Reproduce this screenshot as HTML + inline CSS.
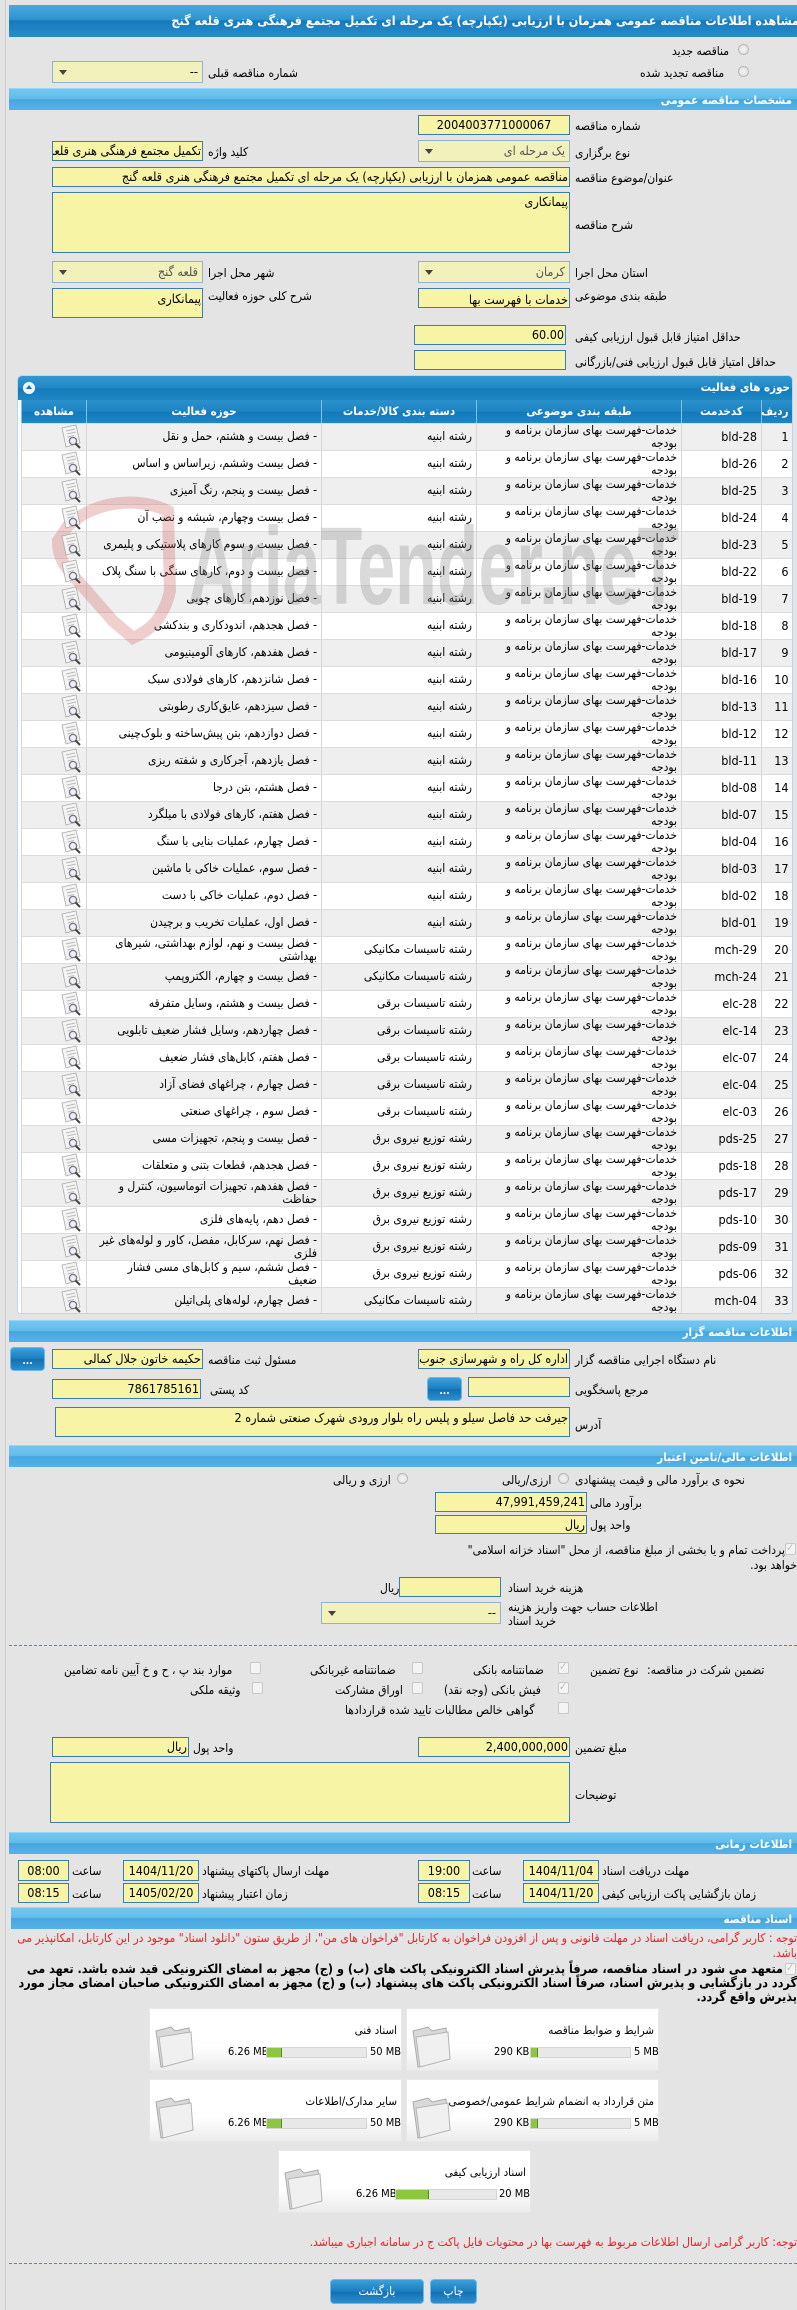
<!DOCTYPE html>
<html><head><meta charset="utf-8">
<style>
*{box-sizing:border-box;margin:0;padding:0}
body{width:797px;height:2310px;background:#e4e4e4;font-family:"DejaVu Sans Condensed","DejaVu Sans",sans-serif;font-size:11px;color:#000;position:relative;overflow:hidden}
.a{position:absolute}
.l{position:absolute;white-space:nowrap;direction:rtl;font-size:12px;line-height:14px}
.i{position:absolute;background:#f7f5a5;border:1px solid #3b7cb3;direction:rtl;white-space:nowrap;overflow:hidden;font-size:12.5px;padding:0 1px;text-align:right}
.s{position:absolute;background:#f2f0bb;border:1px solid #8fb3d0;direction:rtl;white-space:nowrap;overflow:hidden;font-size:12.5px;padding:0 4px;color:#555}
.s:after{content:"";position:absolute;left:6px;top:50%;margin-top:-2px;border:4px solid transparent;border-top:5px solid #444;border-bottom:0}
.h{position:absolute;left:9px;width:788px;height:22px;background:linear-gradient(#74c6ef 0%,#62bdea 45%,#46a6e0 50%,#56b2e6 100%);border-top:1px solid #9ad6f5;color:#fff;font-weight:bold;font-size:11.5px;direction:rtl;padding-right:5px;line-height:22px}
.r{position:absolute;width:11px;height:11px;border-radius:50%;border:1px solid #b8b8b8;background:radial-gradient(#f4f4f4,#dcdcdc)}
.c{position:absolute;width:11px;height:12px;border:1px solid #c8c8c8;background:#f4f4f4;border-radius:2px}
.c.k:after{content:"✓";position:absolute;left:0;top:-3px;font-size:11px;color:#bbb}
.b{position:absolute;background:linear-gradient(#3aa0dc,#1b7dbf 50%,#1370b2 52%,#2a8fd0);border:1px solid #6bb9e6;border-radius:4px;color:#fff;text-align:center;font-weight:bold}
table{border-collapse:collapse;table-layout:fixed;direction:rtl}
td,th{height:27px;padding:0 4px;font-size:12px;line-height:13px;text-align:right;vertical-align:middle;border-left:1px solid #d6d6d6;border-bottom:1px solid #dcdcdc;overflow:hidden}
td:nth-child(3){padding-left:28px}
td:nth-child(5){padding-left:12px}
th{height:23px;background:linear-gradient(#2a91cc,#1d83c2 50%,#137ab9 52%,#1f86c4);color:#fff;text-align:center;border-left:1px solid #7cc3ea;font-size:11.5px}
tr:nth-child(even) td{background:#efefef}
tr:nth-child(odd) td{background:#fff}
td.n{text-align:right;font-size:12.5px;padding-left:4px}
.fb{position:absolute;width:253px;height:63px;background:linear-gradient(#fff 60%,#ececec);border:1px solid #e8e8e8}
.fb .t{position:absolute;right:4px;top:14px;direction:rtl;font-size:11.5px;white-space:nowrap}
.fb .bar{position:absolute;top:38px;height:11px;background:#e8e8e8;border:1px solid #d4d4d4}
.fb .bar i{position:absolute;left:0;top:0;bottom:0;background:#8dc63f;border-right:1px solid #5a8a20}
.fb .sz{position:absolute;top:36px;font-size:11px;white-space:nowrap}
</style></head><body>
<div class="a" style="left:5px;top:0;width:1px;height:2310px;background:#cfcfcf"></div>

<div class="a" style="left:9px;top:5px;width:788px;height:32px;background:linear-gradient(#48a9dc 0%,#2f94d0 45%,#157abb 50%,#2a8ccc 100%);overflow:hidden">
<div class="a" style="right:-2px;top:8px;white-space:nowrap;direction:rtl;color:#fff;font-weight:bold;font-size:12.5px">مشاهده اطلاعات مناقصه عمومی همزمان با ارزیابی (یکپارچه) یک مرحله ای تکمیل مجتمع فرهنگی هنری قلعه گنج</div></div>

<div class="r" style="left:738px;top:44px"></div><div class="l" style="left:672px;top:44px">مناقصه جدید</div>
<div class="r" style="left:738px;top:66px"></div><div class="l" style="left:640px;top:66px">مناقصه تجدید شده</div>
<div class="s" style="left:52px;top:61px;width:151px;height:22px;line-height:20px;color:#000">--</div>
<div class="l" style="left:208px;top:66px">شماره مناقصه قبلی</div>

<div class="h" style="top:88px">مشخصات مناقصه عمومی</div>

<div class="i" style="left:418px;top:115px;width:152px;height:20px;line-height:18px;text-align:center">2004003771000067</div><div class="l" style="left:575px;top:119px">شماره مناقصه</div>
<div class="s" style="left:418px;top:140px;width:152px;height:22px;line-height:20px">یک مرحله ای</div><div class="l" style="left:575px;top:146px">نوع برگزاری</div>
<div class="i" style="left:52px;top:141px;width:151px;height:20px;line-height:18px">تکمیل مجتمع فرهنگی هنری قلعه گنج</div><div class="l" style="left:208px;top:145px">کلید واژه</div>
<div class="i" style="left:52px;top:167px;width:518px;height:20px;line-height:18px">مناقصه عمومی همزمان با ارزیابی (یکپارچه) یک مرحله ای تکمیل مجتمع فرهنگی هنری قلعه گنج</div><div class="l" style="left:575px;top:171px">عنوان/موضوع مناقصه</div>
<div class="i" style="left:52px;top:192px;width:518px;height:61px;line-height:18px;white-space:normal">پیمانکاری</div><div class="l" style="left:575px;top:218px">شرح مناقصه</div>
<div class="s" style="left:418px;top:261px;width:152px;height:22px;line-height:20px">کرمان</div><div class="l" style="left:575px;top:266px">استان محل اجرا</div>
<div class="s" style="left:52px;top:261px;width:151px;height:22px;line-height:20px">قلعه گنج</div><div class="l" style="left:208px;top:266px">شهر محل اجرا</div>
<div class="i" style="left:418px;top:288px;width:152px;height:20px;line-height:22px">خدمات با فهرست بها</div><div class="l" style="left:575px;top:289px">طبقه بندی موضوعی</div>
<div class="i" style="left:52px;top:288px;width:151px;height:30px;line-height:20px">پیمانکاری</div><div class="l" style="left:208px;top:289px">شرح کلی حوزه فعالیت</div>
<div class="i" style="left:414px;top:325px;width:152px;height:20px;line-height:18px">60.00</div><div class="l" style="left:575px;top:330px">حداقل امتیاز قابل قبول ارزیابی کیفی</div>
<div class="i" style="left:414px;top:350px;width:152px;height:20px"></div><div class="l" style="left:575px;top:355px">حداقل امتیاز قابل قبول ارزیابی فنی/بازرگانی</div>

<div class="a" style="left:17px;top:375px;width:776px;height:939px;border:1px solid #b9d8ec;border-radius:5px 5px 3px 3px;background:#fff;overflow:hidden">
<div class="a" style="left:0;top:0;width:776px;height:24px;background:linear-gradient(#3198d2,#2288c6 50%,#147bbb 52%,#1f86c4);color:#fff;font-weight:bold;font-size:11.5px;direction:rtl;padding-right:4px;line-height:22px">حوزه های فعالیت</div>
<div class="a" style="left:5px;top:6px;width:12px;height:12px;border-radius:50%;background:#e8f3fb;border:1px solid #fff"><div class="a" style="left:2px;top:2px;border:3px solid transparent;border-bottom:4px solid #1b6fa8;border-top:0"></div></div>
<table class="a" style="left:3px;top:24px;width:771px">
<colgroup><col style="width:31px"><col style="width:80px"><col style="width:205px"><col style="width:155px"><col style="width:235px"><col style="width:65px"></colgroup>
<tr><th>ردیف</th><th>کدخدمت</th><th>طبقه بندی موضوعی</th><th>دسته بندی کالا/خدمات</th><th>حوزه فعالیت</th><th>مشاهده</th></tr>
<tr><td class="n">1</td><td class="n">bld-28</td><td>خدمات-فهرست بهای سازمان برنامه و بودجه</td><td>رشته ابنیه</td><td>- فصل بیست و هشتم، حمل و نقل</td><td></td></tr>
<tr><td class="n">2</td><td class="n">bld-26</td><td>خدمات-فهرست بهای سازمان برنامه و بودجه</td><td>رشته ابنیه</td><td>- فصل بیست وششم، زیراساس و اساس</td><td></td></tr>
<tr><td class="n">3</td><td class="n">bld-25</td><td>خدمات-فهرست بهای سازمان برنامه و بودجه</td><td>رشته ابنیه</td><td>- فصل بیست و پنجم، رنگ آمیزی</td><td></td></tr>
<tr><td class="n">4</td><td class="n">bld-24</td><td>خدمات-فهرست بهای سازمان برنامه و بودجه</td><td>رشته ابنیه</td><td>- فصل بیست وچهارم، شیشه و نصب آن</td><td></td></tr>
<tr><td class="n">5</td><td class="n">bld-23</td><td>خدمات-فهرست بهای سازمان برنامه و بودجه</td><td>رشته ابنیه</td><td>- فصل بیست و سوم کارهای پلاستیکی و پلیمری</td><td></td></tr>
<tr><td class="n">6</td><td class="n">bld-22</td><td>خدمات-فهرست بهای سازمان برنامه و بودجه</td><td>رشته ابنیه</td><td>- فصل بیست و دوم، کارهای سنگی با سنگ پلاک</td><td></td></tr>
<tr><td class="n">7</td><td class="n">bld-19</td><td>خدمات-فهرست بهای سازمان برنامه و بودجه</td><td>رشته ابنیه</td><td>- فصل نوزدهم، کارهای چوبی</td><td></td></tr>
<tr><td class="n">8</td><td class="n">bld-18</td><td>خدمات-فهرست بهای سازمان برنامه و بودجه</td><td>رشته ابنیه</td><td>- فصل هجدهم، اندودکاری و بندکشی</td><td></td></tr>
<tr><td class="n">9</td><td class="n">bld-17</td><td>خدمات-فهرست بهای سازمان برنامه و بودجه</td><td>رشته ابنیه</td><td>- فصل هفدهم، کارهای آلومینیومی</td><td></td></tr>
<tr><td class="n">10</td><td class="n">bld-16</td><td>خدمات-فهرست بهای سازمان برنامه و بودجه</td><td>رشته ابنیه</td><td>- فصل شانزدهم، کارهای فولادی سبک</td><td></td></tr>
<tr><td class="n">11</td><td class="n">bld-13</td><td>خدمات-فهرست بهای سازمان برنامه و بودجه</td><td>رشته ابنیه</td><td>- فصل سیزدهم، عایق‌کاری رطوبتی</td><td></td></tr>
<tr><td class="n">12</td><td class="n">bld-12</td><td>خدمات-فهرست بهای سازمان برنامه و بودجه</td><td>رشته ابنیه</td><td>- فصل دوازدهم، بتن پیش‌ساخته و بلوک‌چینی</td><td></td></tr>
<tr><td class="n">13</td><td class="n">bld-11</td><td>خدمات-فهرست بهای سازمان برنامه و بودجه</td><td>رشته ابنیه</td><td>- فصل یازدهم، آجرکاری و شفته ریزی</td><td></td></tr>
<tr><td class="n">14</td><td class="n">bld-08</td><td>خدمات-فهرست بهای سازمان برنامه و بودجه</td><td>رشته ابنیه</td><td>- فصل هشتم، بتن درجا</td><td></td></tr>
<tr><td class="n">15</td><td class="n">bld-07</td><td>خدمات-فهرست بهای سازمان برنامه و بودجه</td><td>رشته ابنیه</td><td>- فصل هفتم، کارهای فولادی با میلگرد</td><td></td></tr>
<tr><td class="n">16</td><td class="n">bld-04</td><td>خدمات-فهرست بهای سازمان برنامه و بودجه</td><td>رشته ابنیه</td><td>- فصل چهارم، عملیات بنایی با سنگ</td><td></td></tr>
<tr><td class="n">17</td><td class="n">bld-03</td><td>خدمات-فهرست بهای سازمان برنامه و بودجه</td><td>رشته ابنیه</td><td>- فصل سوم، عملیات خاکی با ماشین</td><td></td></tr>
<tr><td class="n">18</td><td class="n">bld-02</td><td>خدمات-فهرست بهای سازمان برنامه و بودجه</td><td>رشته ابنیه</td><td>- فصل دوم، عملیات خاکی با دست</td><td></td></tr>
<tr><td class="n">19</td><td class="n">bld-01</td><td>خدمات-فهرست بهای سازمان برنامه و بودجه</td><td>رشته ابنیه</td><td>- فصل اول، عملیات تخریب و برچیدن</td><td></td></tr>
<tr><td class="n">20</td><td class="n">mch-29</td><td>خدمات-فهرست بهای سازمان برنامه و بودجه</td><td>رشته تاسیسات مکانیکی</td><td>- فصل بیست و نهم، لوازم بهداشتی، شیرهای بهداشتی</td><td></td></tr>
<tr><td class="n">21</td><td class="n">mch-24</td><td>خدمات-فهرست بهای سازمان برنامه و بودجه</td><td>رشته تاسیسات مکانیکی</td><td>- فصل بیست و چهارم، الکتروپمپ</td><td></td></tr>
<tr><td class="n">22</td><td class="n">elc-28</td><td>خدمات-فهرست بهای سازمان برنامه و بودجه</td><td>رشته تاسیسات برقی</td><td>- فصل بیست و هشتم، وسایل متفرقه</td><td></td></tr>
<tr><td class="n">23</td><td class="n">elc-14</td><td>خدمات-فهرست بهای سازمان برنامه و بودجه</td><td>رشته تاسیسات برقی</td><td>- فصل چهاردهم، وسایل فشار ضعیف تابلویی</td><td></td></tr>
<tr><td class="n">24</td><td class="n">elc-07</td><td>خدمات-فهرست بهای سازمان برنامه و بودجه</td><td>رشته تاسیسات برقی</td><td>- فصل هفتم، کابل‌های فشار ضعیف</td><td></td></tr>
<tr><td class="n">25</td><td class="n">elc-04</td><td>خدمات-فهرست بهای سازمان برنامه و بودجه</td><td>رشته تاسیسات برقی</td><td>- فصل چهارم ، چراغهای فضای آزاد</td><td></td></tr>
<tr><td class="n">26</td><td class="n">elc-03</td><td>خدمات-فهرست بهای سازمان برنامه و بودجه</td><td>رشته تاسیسات برقی</td><td>- فصل سوم ، چراغهای صنعتی</td><td></td></tr>
<tr><td class="n">27</td><td class="n">pds-25</td><td>خدمات-فهرست بهای سازمان برنامه و بودجه</td><td>رشته توزیع نیروی برق</td><td>- فصل بیست و پنجم، تجهیزات مسی</td><td></td></tr>
<tr><td class="n">28</td><td class="n">pds-18</td><td>خدمات-فهرست بهای سازمان برنامه و بودجه</td><td>رشته توزیع نیروی برق</td><td>- فصل هجدهم، قطعات بتنی و متعلقات</td><td></td></tr>
<tr><td class="n">29</td><td class="n">pds-17</td><td>خدمات-فهرست بهای سازمان برنامه و بودجه</td><td>رشته توزیع نیروی برق</td><td>- فصل هفدهم، تجهیزات اتوماسیون، کنترل و حفاظت</td><td></td></tr>
<tr><td class="n">30</td><td class="n">pds-10</td><td>خدمات-فهرست بهای سازمان برنامه و بودجه</td><td>رشته توزیع نیروی برق</td><td>- فصل دهم، پایه‌های فلزی</td><td></td></tr>
<tr><td class="n">31</td><td class="n">pds-09</td><td>خدمات-فهرست بهای سازمان برنامه و بودجه</td><td>رشته توزیع نیروی برق</td><td>- فصل نهم، سرکابل، مفصل، کاور و لوله‌های غیر فلزی</td><td></td></tr>
<tr><td class="n">32</td><td class="n">pds-06</td><td>خدمات-فهرست بهای سازمان برنامه و بودجه</td><td>رشته توزیع نیروی برق</td><td>- فصل ششم، سیم و کابل‌های مسی فشار ضعیف</td><td></td></tr>
<tr><td class="n">33</td><td class="n">mch-04</td><td>خدمات-فهرست بهای سازمان برنامه و بودجه</td><td>رشته تاسیسات مکانیکی</td><td>- فصل چهارم، لوله‌های پلی‌اتیلن</td><td></td></tr>
</table>
<svg class="a" style="left:0;top:0" width="776" height="939" viewBox="0 0 776 939">
<defs><g id="ic"><path d="M2 3 L16 0 L20 18 L6 22 Z" fill="#f4f4f4" stroke="#aaa" stroke-width="0.8"/><path d="M6 6 L15 4 M7 9 L16 7 M7.5 12 L14 10.5" stroke="#bbb" stroke-width="1"/><circle cx="13" cy="16" r="3.6" fill="#eef" stroke="#777" stroke-width="1.3"/><path d="M15.5 18.5 L20 23" stroke="#444" stroke-width="2"/></g></defs>
<g opacity="0.3"><path d="M50 150 C75 125 120 120 150 135 L152 215 C145 245 130 255 115 262 L95 245 L60 205 C45 190 40 180 40 165 Z" fill="none" stroke="#d06060" stroke-width="12"/>
<g transform="translate(170,228) scale(0.62,1)"><text x="0" y="0" font-family="Liberation Sans" font-weight="bold" font-size="110" fill="#888">AriaTender.neT</text></g></g>
<use href="#ic" x="42" y="49"/><use href="#ic" x="42" y="76"/><use href="#ic" x="42" y="103"/><use href="#ic" x="42" y="130"/><use href="#ic" x="42" y="157"/><use href="#ic" x="42" y="184"/><use href="#ic" x="42" y="211"/><use href="#ic" x="42" y="238"/><use href="#ic" x="42" y="265"/><use href="#ic" x="42" y="292"/><use href="#ic" x="42" y="319"/><use href="#ic" x="42" y="346"/><use href="#ic" x="42" y="373"/><use href="#ic" x="42" y="400"/><use href="#ic" x="42" y="427"/><use href="#ic" x="42" y="454"/><use href="#ic" x="42" y="481"/><use href="#ic" x="42" y="508"/><use href="#ic" x="42" y="535"/><use href="#ic" x="42" y="562"/><use href="#ic" x="42" y="589"/><use href="#ic" x="42" y="616"/><use href="#ic" x="42" y="643"/><use href="#ic" x="42" y="670"/><use href="#ic" x="42" y="697"/><use href="#ic" x="42" y="724"/><use href="#ic" x="42" y="751"/><use href="#ic" x="42" y="778"/><use href="#ic" x="42" y="805"/><use href="#ic" x="42" y="832"/><use href="#ic" x="42" y="859"/><use href="#ic" x="42" y="886"/><use href="#ic" x="42" y="913"/>
</svg>
</div>

<div class="h" style="top:1320px">اطلاعات مناقصه گزار</div>
<div class="i" style="left:418px;top:1349px;width:152px;height:20px;line-height:18px">اداره کل راه و شهرسازی جنوب استان کرمان</div><div class="l" style="left:575px;top:1353px">نام دستگاه اجرایی مناقصه گزار</div>
<div class="i" style="left:52px;top:1349px;width:151px;height:20px;line-height:18px">حکیمه خاتون جلال کمالی</div><div class="l" style="left:208px;top:1353px">مسئول ثبت مناقصه</div>
<div class="b" style="left:10px;top:1347px;width:35px;height:24px;line-height:28px;font-size:10px">...</div>
<div class="i" style="left:468px;top:1377px;width:102px;height:20px"></div><div class="l" style="left:575px;top:1383px">مرجع پاسخگویی</div>
<div class="b" style="left:427px;top:1377px;width:35px;height:24px;line-height:28px;font-size:10px">...</div>
<div class="i" style="left:52px;top:1379px;width:149px;height:20px;line-height:18px">7861785161</div><div class="l" style="left:210px;top:1383px">کد پستی</div>
<div class="i" style="left:55px;top:1407px;width:515px;height:30px;line-height:20px">جیرفت حد فاصل سیلو و پلیس راه بلوار ورودی شهرک صنعتی شماره 2</div><div class="l" style="left:575px;top:1418px">آدرس</div>

<div class="h" style="top:1445px">اطلاعات مالی/تامین اعتبار</div>
<div class="l" style="left:575px;top:1473px">نحوه ی برآورد مالی و قیمت پیشنهادی</div>
<div class="r" style="left:558px;top:1473px"></div><div class="l" style="left:502px;top:1473px">ارزی/ریالی</div>
<div class="r" style="left:397px;top:1473px"></div><div class="l" style="left:333px;top:1473px">ارزی و ریالی</div>
<div class="i" style="left:435px;top:1492px;width:152px;height:20px;line-height:18px">47,991,459,241</div><div class="l" style="left:590px;top:1496px">برآورد مالی</div>
<div class="i" style="left:435px;top:1515px;width:152px;height:19px;line-height:17px">ریال</div><div class="l" style="left:590px;top:1518px">واحد پول</div>
<div class="c k" style="left:785px;top:1543px"></div>
<div class="l" style="right:12px;top:1543px">پرداخت تمام و یا بخشی از مبلغ مناقصه، از محل "اسناد خزانه اسلامی"</div>
<div class="l" style="right:0;top:1558px">خواهد بود.</div>
<div class="i" style="left:399px;top:1577px;width:102px;height:20px"></div><div class="l" style="left:380px;top:1581px">ریال</div><div class="l" style="left:508px;top:1581px">هزینه خرید اسناد</div>
<div class="s" style="left:321px;top:1602px;width:180px;height:22px;line-height:20px;color:#000">--</div>
<div class="l" style="left:508px;top:1600px">اطلاعات حساب جهت واریز هزینه</div><div class="l" style="left:508px;top:1614px">خرید اسناد</div>
<div class="a" style="left:9px;top:1645px;width:788px;border-top:1px dashed #3d8cc2"></div>

<div class="l" style="left:647px;top:1663px">تضمین شرکت در مناقصه:</div>
<div class="l" style="left:590px;top:1663px">نوع تضمین</div>
<div class="c k" style="left:558px;top:1662px"></div><div class="l" style="left:473px;top:1663px">ضمانتنامه بانکی</div>
<div class="c" style="left:412px;top:1662px"></div><div class="l" style="left:310px;top:1663px">ضمانتنامه غیربانکی</div>
<div class="c" style="left:250px;top:1662px"></div><div class="l" style="left:64px;top:1663px">موارد بند پ ، ح و خ آیین نامه تضامین</div>
<div class="c k" style="left:558px;top:1682px"></div><div class="l" style="left:444px;top:1683px">فیش بانکی (وجه نقد)</div>
<div class="c" style="left:412px;top:1682px"></div><div class="l" style="left:335px;top:1683px">اوراق مشارکت</div>
<div class="c" style="left:252px;top:1682px"></div><div class="l" style="left:190px;top:1683px">وثیقه ملکی</div>
<div class="c" style="left:558px;top:1702px"></div><div class="l" style="left:345px;top:1703px">گواهی خالص مطالبات تایید شده قراردادها</div>

<div class="i" style="left:418px;top:1737px;width:152px;height:20px;line-height:18px">2,400,000,000</div><div class="l" style="left:575px;top:1741px">مبلغ تضمین</div>
<div class="i" style="left:52px;top:1737px;width:137px;height:20px;line-height:18px">ریال</div><div class="l" style="left:193px;top:1741px">واحد پول</div>
<div class="i" style="left:50px;top:1762px;width:520px;height:61px"></div><div class="l" style="left:575px;top:1788px">توضیحات</div>

<div class="h" style="top:1832px">اطلاعات زمانی</div>
<div class="l" style="left:602px;top:1864px">مهلت دریافت اسناد</div>
<div class="i" style="left:523px;top:1860px;width:76px;height:21px;line-height:19px;text-align:center">1404/11/04</div>
<div class="l" style="left:472px;top:1864px">ساعت</div>
<div class="i" style="left:418px;top:1860px;width:52px;height:21px;line-height:19px;text-align:center">19:00</div>
<div class="l" style="left:202px;top:1864px">مهلت ارسال پاکتهای پیشنهاد</div>
<div class="i" style="left:123px;top:1860px;width:76px;height:21px;line-height:19px;text-align:center">1404/11/20</div>
<div class="l" style="left:72px;top:1864px">ساعت</div>
<div class="i" style="left:18px;top:1860px;width:51px;height:21px;line-height:19px;text-align:center">08:00</div>
<div class="l" style="left:602px;top:1887px">زمان بازگشایی پاکت ارزیابی کیفی</div>
<div class="i" style="left:523px;top:1883px;width:76px;height:20px;line-height:18px;text-align:center">1404/11/20</div>
<div class="l" style="left:472px;top:1887px">ساعت</div>
<div class="i" style="left:418px;top:1883px;width:52px;height:20px;line-height:18px;text-align:center">08:15</div>
<div class="l" style="left:202px;top:1887px">زمان اعتبار پیشنهاد</div>
<div class="i" style="left:123px;top:1883px;width:76px;height:20px;line-height:18px;text-align:center">1405/02/20</div>
<div class="l" style="left:72px;top:1887px">ساعت</div>
<div class="i" style="left:18px;top:1883px;width:51px;height:20px;line-height:18px;text-align:center">08:15</div>

<div class="h" style="top:1907px;left:11px;width:786px">اسناد مناقصه</div>
<div class="a" style="right:0;top:1931px;width:790px;direction:rtl;color:#e8202a;font-size:12px;line-height:15px">توجه : کاربر گرامی، دریافت اسناد در مهلت قانونی و پس از افزودن فراخوان به کارتابل "فراخوان های من"، از طریق ستون "دانلود اسناد" موجود در این کارتابل، امکانپذیر می باشد.</div>
<div class="c k" style="left:785px;top:1963px"></div>
<div class="a" style="right:0;top:1962px;width:790px;direction:rtl;font-weight:bold;font-size:12.5px;line-height:14px;text-indent:14px">متعهد می شود در اسناد مناقصه، صرفاً پذیرش اسناد الکترونیکی پاکت های (ب) و (ج) مجهز به امضای الکترونیکی قید شده باشد. تعهد می گردد در بازگشایی و پذیرش اسناد، صرفاً اسناد الکترونیکی پاکت های پیشنهاد (ب) و (ج) مجهز به امضای الکترونیکی صاحبان امضای مجاز مورد پذیرش واقع گردد.</div>

<svg width="0" height="0" style="position:absolute"><defs><g id="fd"><path d="M3 8 L18 4 L22 8 L36 5 L40 36 L8 44 Z" fill="#d9d9d9" stroke="#aaa"/><path d="M6 14 L38 9 L40 36 L10 44 Z" fill="#f0f0f0" stroke="#b5b5b5"/></g></defs></svg>

<div class="fb" style="left:406px;top:2008px"><svg class="a" style="left:3px;top:14px" width="44" height="46"><use href="#fd"/></svg><div class="t">شرایط و ضوابط مناقصه</div><div class="sz" style="left:87px">290 KB</div><div class="bar" style="left:123px;width:101px"><i style="width:7px"></i></div><div class="sz" style="left:227px">5 MB</div></div>
<div class="fb" style="left:149px;top:2008px"><svg class="a" style="left:3px;top:14px" width="44" height="46"><use href="#fd"/></svg><div class="t">اسناد فنی</div><div class="sz" style="left:78px">6.26 MB</div><div class="bar" style="left:116px;width:101px"><i style="width:15px"></i></div><div class="sz" style="left:220px">50 MB</div></div>
<div class="fb" style="left:406px;top:2079px"><svg class="a" style="left:3px;top:14px" width="44" height="46"><use href="#fd"/></svg><div class="t">متن قرارداد به انضمام شرایط عمومی/خصوصی</div><div class="sz" style="left:87px">290 KB</div><div class="bar" style="left:123px;width:101px"><i style="width:7px"></i></div><div class="sz" style="left:227px">5 MB</div></div>
<div class="fb" style="left:149px;top:2079px"><svg class="a" style="left:3px;top:14px" width="44" height="46"><use href="#fd"/></svg><div class="t">سایر مدارک/اطلاعات</div><div class="sz" style="left:78px">6.26 MB</div><div class="bar" style="left:116px;width:101px"><i style="width:15px"></i></div><div class="sz" style="left:220px">50 MB</div></div>
<div class="fb" style="left:278px;top:2150px"><svg class="a" style="left:3px;top:14px" width="44" height="46"><use href="#fd"/></svg><div class="t">اسناد ارزیابی کیفی</div><div class="sz" style="left:77px">6.26 MB</div><div class="bar" style="left:116px;width:102px"><i style="width:33px"></i></div><div class="sz" style="left:220px">20 MB</div></div>

<div class="a" style="right:0;top:2235px;white-space:nowrap;direction:rtl;color:#e8202a;font-size:12px">توجه: کاربر گرامی ارسال اطلاعات مربوط به فهرست بها در محتویات فایل پاکت ج در سامانه اجباری میباشد.</div>
<div class="a" style="left:9px;top:2263px;width:788px;border-top:1px dashed #3d8cc2"></div>
<div class="b" style="left:330px;top:2279px;width:94px;height:25px;line-height:23px;font-weight:normal;font-size:12px">بازگشت</div>
<div class="b" style="left:430px;top:2279px;width:47px;height:25px;line-height:23px;font-weight:normal;font-size:12px">چاپ</div>
</body></html>
